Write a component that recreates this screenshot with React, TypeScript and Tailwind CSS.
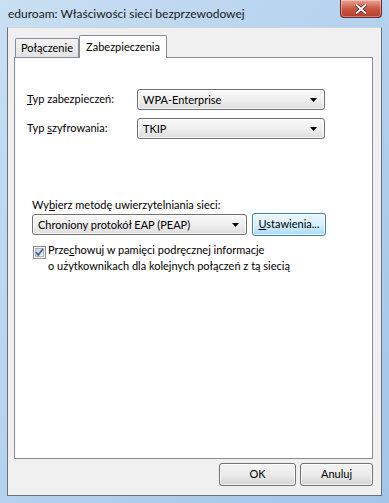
import React from "react";

// Vista style combobox (drop-down list)
const Combo = ({ value, className = "" }: { value: string; className?: string }) => (
  <div
    className={`flex h-[21px] items-center rounded-[3px] border border-[#707070] bg-gradient-to-b from-[#f9f9f9] via-[#efefef] to-[#dddddd] pl-[5px] pr-[7px] shadow-[inset_0_0_0_1px_rgba(255,255,255,0.8)] ${className}`}
  >
    <span className="flex-1 truncate leading-[16px]">{value}</span>
    <svg width="7" height="4" viewBox="0 0 7 4" className="shrink-0">
      <path d="M0 0h7L3.5 4z" fill="#000" />
    </svg>
  </div>
);

const Button = ({
  children,
  className = "",
  active = false,
}: {
  children: React.ReactNode;
  className?: string;
  active?: boolean;
}) => (
  <div
    className={`flex h-[23px] items-center justify-center rounded-[3px] border shadow-[inset_0_0_0_1px_rgba(255,255,255,0.8)] ${
      active
        ? "border-[#3c7fb1] bg-gradient-to-b from-[#eaf6fd] via-[#d9f0fc] to-[#a7d9f5]"
        : "border-[#707070] bg-gradient-to-b from-[#f4f4f4] via-[#ebebeb] to-[#d4d4d4]"
    } ${className}`}
  >
    {children}
  </div>
);

const CheckBox = () => (
  <svg width="13" height="13" viewBox="0 0 13 13" className="shrink-0">
    <defs>
      <linearGradient id="cb-bg" x1="0" y1="0" x2="1" y2="1">
        <stop offset="0%" stopColor="#cbcfd5" />
        <stop offset="100%" stopColor="#f6f6f6" />
      </linearGradient>
    </defs>
    <rect x="0.5" y="0.5" width="12" height="12" fill="#f4f4f4" stroke="#8e8f8f" />
    <rect x="2.5" y="2.5" width="8" height="8" fill="url(#cb-bg)" stroke="#aeb3b9" />
    <path d="M3 6.2 L5.2 9 L10 3" fill="none" stroke="#4b6397" strokeWidth="1.8" />
  </svg>
);

export default function App() {
  return (
    <div className="relative flex h-[503px] w-[389px] flex-col bg-gradient-to-br from-[#c9dff3] via-[#b4d1ee] to-[#a3c5e8] font-['Lato','Noto_Sans',sans-serif] text-[11px] text-black">
      {/* title bar */}
      <div className="flex h-[27px] shrink-0 items-start pl-[8px] pt-[5px]">
        <span className="text-[12px] leading-[17px] text-[#1a1a1a]">eduroam: Właściwości sieci bezprzewodowej</span>
      </div>

      {/* close button */}
      <div className="absolute right-[7px] top-0 flex h-[18px] w-[42px] items-center justify-center rounded-b-[4px] border border-t-0 border-[#6d2a2a] bg-gradient-to-b from-[#e8a493] via-[#c95a44] to-[#b93a28] shadow-[inset_0_0_0_1px_rgba(255,255,255,0.35)]">
        <svg width="12" height="10" viewBox="0 0 12 10">
          <path d="M1 0.5 L11 9.5 M11 0.5 L1 9.5" stroke="#5a1f1f" strokeWidth="3.4" />
          <path d="M1 0.5 L11 9.5 M11 0.5 L1 9.5" stroke="#ffffff" strokeWidth="2" />
        </svg>
      </div>

      {/* client area */}
      <div className="mx-[7px] mb-[7px] flex flex-1 flex-col border border-[#6b717a] border-t-[#c8d4e0] bg-[#f0f0f0] pl-[6px] pr-[8px] pt-[7px]">
        {/* tabs */}
        <div className="flex h-[22px] items-end pl-[1px]">
          <div className="flex h-[19px] w-[64px] items-center justify-center rounded-t-[2px] border border-b-0 border-[#898c95] bg-gradient-to-b from-[#f2f2f2] to-[#e3e3e3] pt-[1px]">
            Połączenie
          </div>
          <div className="relative top-[1px] z-10 flex h-[23px] w-[88px] items-start justify-center rounded-t-[2px] border border-b-0 border-[#898c95] bg-white pt-[3px]">
            Zabezpieczenia
          </div>
        </div>

        {/* tab panel */}
        <div className="flex h-[402px] flex-col border border-[#898c95] bg-white">
          <div className="mt-[31px] flex flex-col gap-[8px] pl-[12px]">
            <div className="flex items-center">
              <span className="w-[110px]">
                <u>T</u>yp zabezpieczeń:
              </span>
              <Combo value="WPA-Enterprise" className="w-[188px]" />
            </div>
            <div className="flex items-center">
              <span className="w-[110px]">
                Typ <u>s</u>zyfrowania:
              </span>
              <Combo value="TKIP" className="w-[188px]" />
            </div>
          </div>

          <div className="mt-[58px] flex flex-col pl-[17px]">
            <span className="leading-[16px]">
              Wy<u>b</u>ierz metodę uwierzytelniania sieci:
            </span>
            <div className="flex items-center gap-[5px]">
              <Combo value="Chroniony protokół EAP (PEAP)" className="w-[215px]" />
              <Button active className="w-[74px]">
                <span>
                  <u>U</u>stawienia...
                </span>
              </Button>
            </div>
            <div className="mt-[6px] flex items-start gap-[2px] pl-[1px]">
              <div className="pt-[4px]">
                <CheckBox />
              </div>
              <div className="flex flex-col leading-[16px]">
                <span>
                  Prze<u>c</u>howuj w pamięci podręcznej informacje
                </span>
                <span>o użytkownikach dla kolejnych połączeń z tą siecią</span>
              </div>
            </div>
          </div>
        </div>

        {/* dialog buttons */}
        <div className="mt-[4px] flex justify-end gap-[4px]">
          <Button className="w-[77px]">OK</Button>
          <Button className="w-[73px]">Anuluj</Button>
        </div>
      </div>
    </div>
  );
}
